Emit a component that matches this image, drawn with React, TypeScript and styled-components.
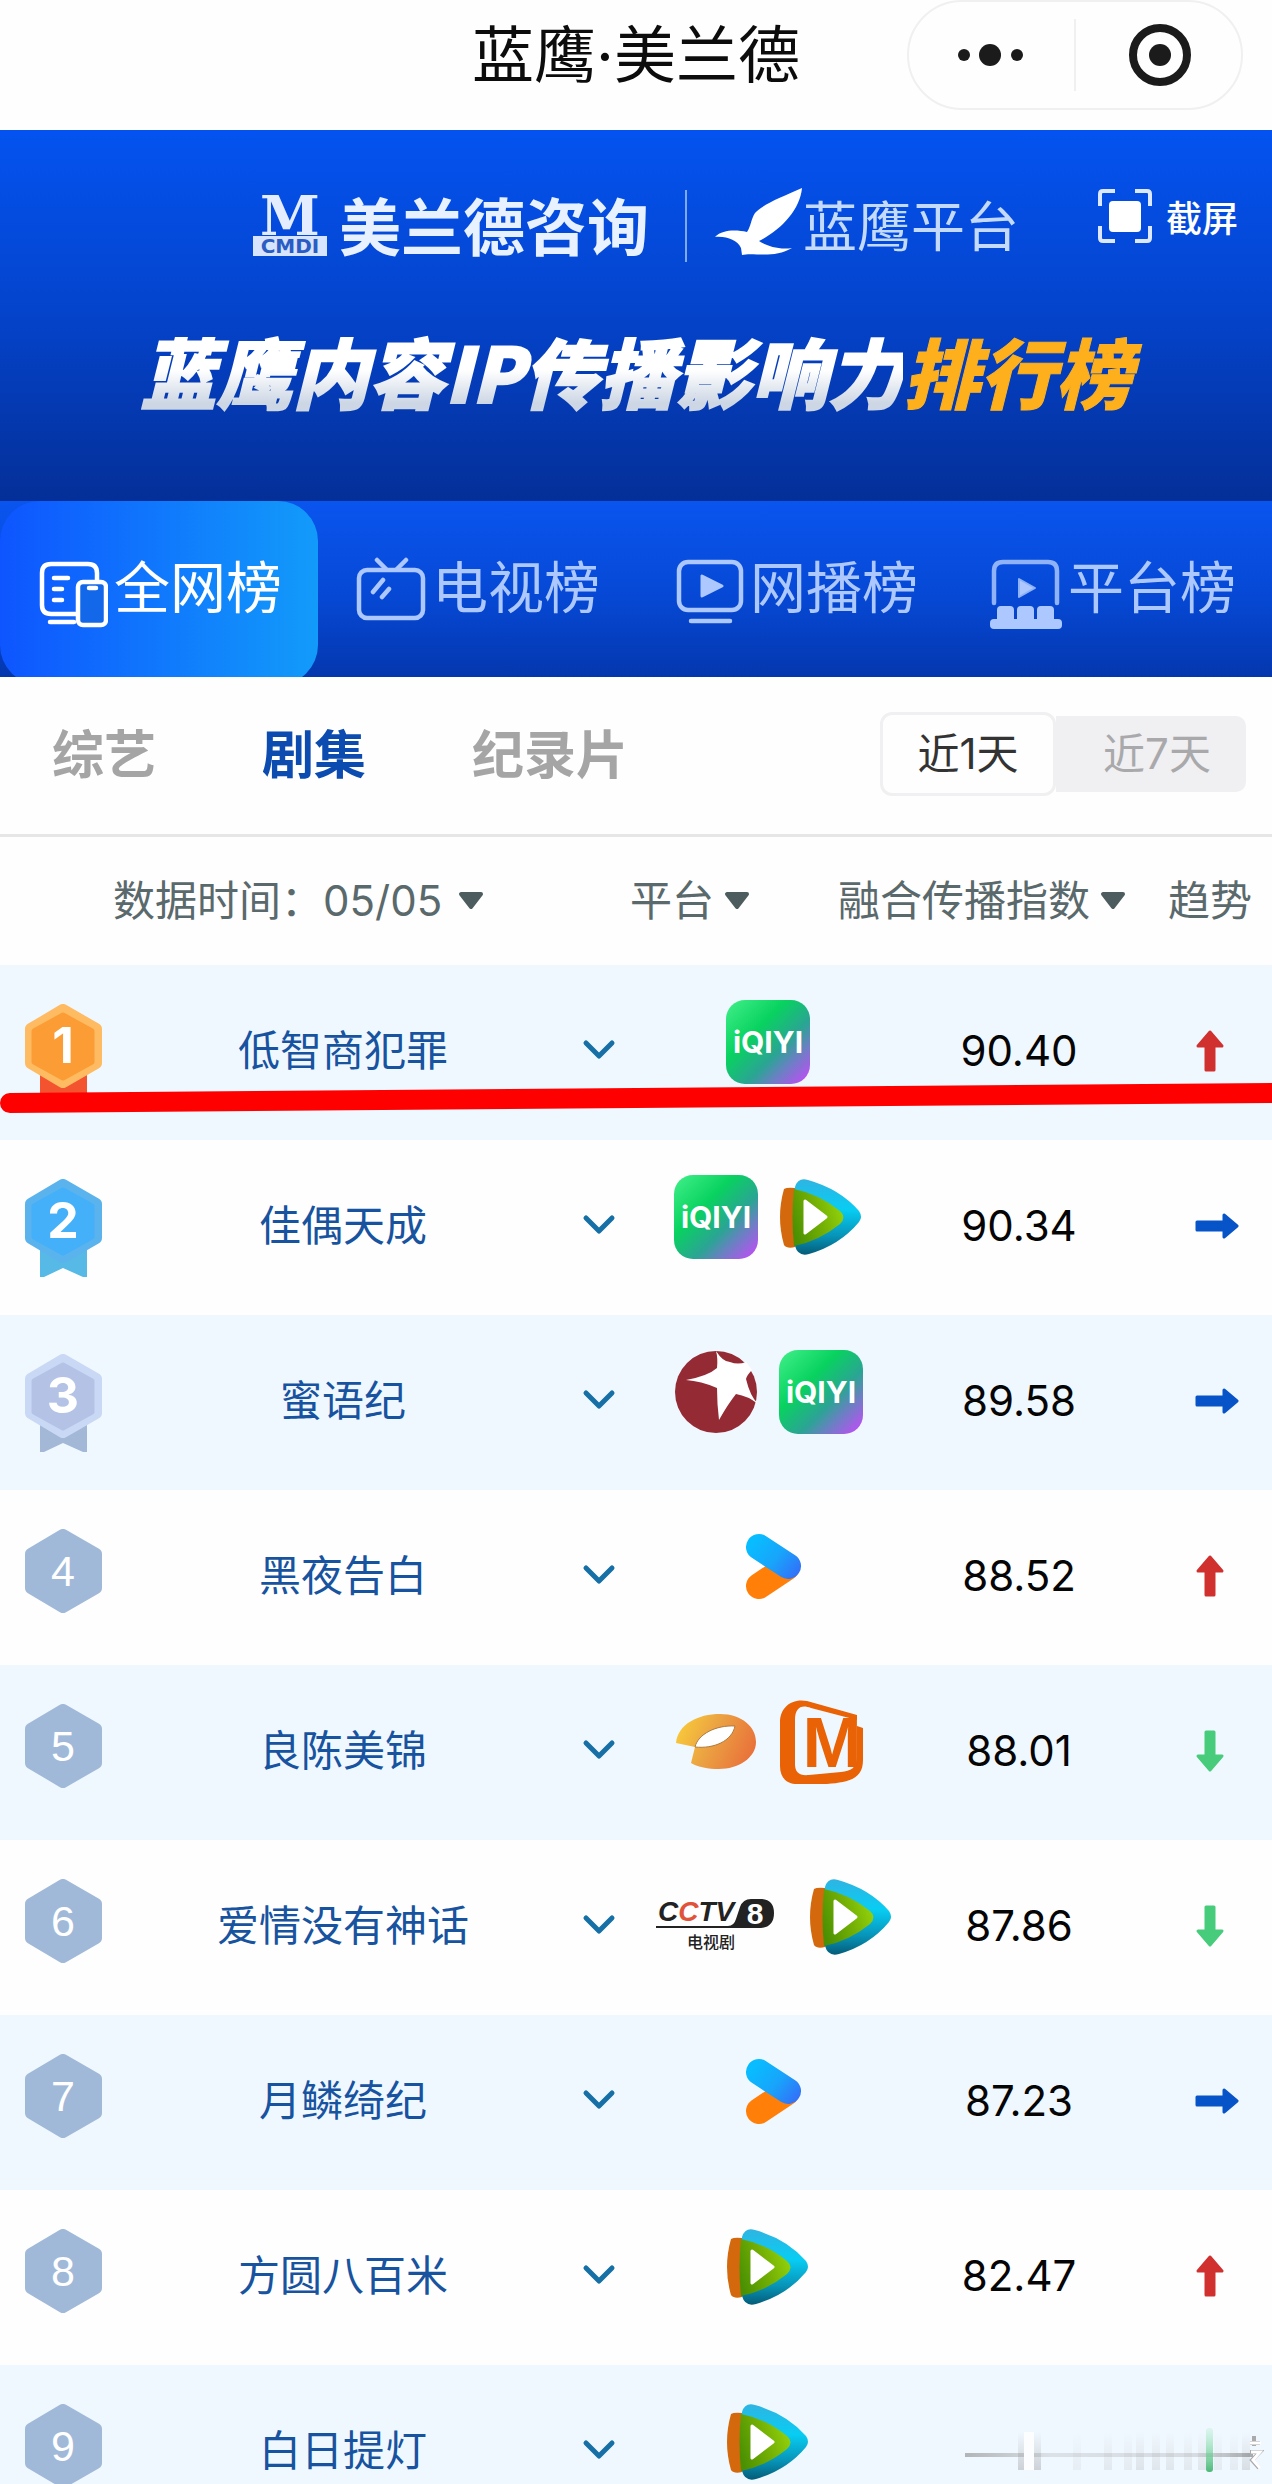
import React, { useState } from "react";
import styled, { createGlobalStyle } from "styled-components";

const GlobalStyle = createGlobalStyle`
  * { box-sizing: border-box; }
  body { margin: 0; background: #fefefe; }
  button, select { font: inherit; color: inherit; }
`;

const sans = `Inter, "Noto Sans CJK SC", "Noto Sans", sans-serif`;
const cjk = `"Noto Sans CJK SC", "Noto Sans", sans-serif`;

const Screen = styled.div`
  position: relative;
  display: flex;
  flex-direction: column;
  height: 100vh;
  overflow: hidden;
  background: #fefefe;
  font-family: ${sans};
  font-size: 42px;
  line-height: 56px;
`;

const PlainButton = styled.button`
  margin: 0;
  padding: 0;
  border: 0;
  background: none;
  cursor: pointer;
  white-space: nowrap;
`;

/* ---------- title bar ---------- */

const TitleBar = styled.header`
  flex: none;
  display: grid;
  grid-template-columns: 1fr auto 1fr;
  align-items: start;
  height: 130px;
`;

const AppTitle = styled.h1`
  grid-column: 2;
  margin: 0;
  padding-top: 16px;
  font: 400 62px/80px ${sans};
  color: #0c0c0c;
`;

const Capsule = styled.div`
  justify-self: end;
  display: flex;
  align-items: center;
  width: 336px;
  height: 110px;
  margin-right: 29px;
  border: 2px solid #f0f0f1;
  border-radius: 55px;
`;

const CapsuleButton = styled(PlainButton)`
  flex: 1;
  display: grid;
  place-items: center;
  height: 72px;
  & + & { border-left: 2px solid #f0f0f1; }
`;

/* ---------- banner ---------- */

const Banner = styled.section`
  flex: none;
  height: 371px;
  padding-top: 58px;
  background: linear-gradient(#0453f0, #0445cf 45%, #042f98);
`;

const BrandRow = styled.div`
  display: grid;
  grid-template-columns: 1fr auto 1fr;
`;

const Brands = styled.div`
  grid-column: 2;
  display: flex;
  align-items: center;
  height: 76px;
`;

const CmdiMark = styled.span`
  display: flex;
  flex-direction: column;
  align-items: center;
  width: 74px;
  margin-right: 12px;
  color: #e4edff;
`;

const CmdiLetter = styled.span`
  font: 700 54px/40px "DejaVu Serif", serif;
`;

const CmdiName = styled.span`
  width: 74px;
  background: #d6e4ff;
  color: #2a5cc4;
  font: 700 20px/20px "DejaVu Sans", sans-serif;
  text-align: center;
`;

const BrandName = styled.span`
  font: 700 62px/72px ${cjk};
  height: 76px;
  color: #e8f1ff;
`;

const PlatformName = styled.span`
  font: 400 54px/72px ${cjk};
  height: 76px;
  color: #c4dafc;
`;

const BrandRule = styled.span`
  width: 2px;
  height: 72px;
  margin: 0 26px 0 36px;
  background: #7fa8f5;
`;

const CaptureButton = styled(PlainButton)`
  justify-self: end;
  align-self: start;
  display: flex;
  align-items: center;
  gap: 14px;
  margin-right: 34px;
  font: 500 36px/52px ${cjk};
  color: #fff;
`;

const BannerTitle = styled.h2`
  display: flex;
  justify-content: center;
  margin: 50px 0 0;
  font: italic 900 76px/112px ${cjk};
`;

const TitlePart = styled.span`
  background: linear-gradient(#ffffff 50%, #ccd6e4 80%);
  background-clip: text;
  -webkit-background-clip: text;
  color: transparent;
  -webkit-text-stroke: 2px transparent;
`;

const TitleAccent = styled.span`
  color: #fdb01c;
  -webkit-text-stroke: 1px #fdb01c;
`;

/* ---------- main tabs ---------- */

const Tabs = styled.nav`
  flex: none;
  display: grid;
  grid-template-columns: repeat(4, 1fr);
  height: 176px;
  overflow: hidden;
  background: linear-gradient(#0a55ef, #0648d4 55%, #0437ae);
`;

const Tab = styled(PlainButton)<{ $active: boolean }>`
  display: flex;
  align-items: flex-end;
  justify-content: center;
  gap: 6px;
  height: 184px;
  padding-bottom: 56px;
  border-radius: 40px;
  background: ${(p) =>
    p.$active ? "linear-gradient(90deg, #0e55ff, #129bfa)" : "none"};
  color: ${(p) => (p.$active ? "#fff" : "#adc8ff")};
  font: 400 56px/90px ${cjk};
`;

/* ---------- filters ---------- */

const Filters = styled.div`
  flex: none;
  display: flex;
  align-items: center;
  justify-content: space-between;
  height: 160px;
  padding: 0 26px 4px 52px;
  border-bottom: 3px solid #e6e6e6;
`;

const Categories = styled.div`
  display: flex;
  gap: 106px;
  padding-bottom: 4px;
`;

const Category = styled(PlainButton)<{ $active: boolean }>`
  font: 700 52px/76px ${cjk};
  color: ${(p) => (p.$active ? "#0c4bb0" : "#a5a5a5")};
`;

const Segments = styled.div`
  display: flex;
  align-items: center;
`;

const Segment = styled(PlainButton)<{ $active: boolean }>`
  width: ${(p) => (p.$active ? 176 : 190)}px;
  height: ${(p) => (p.$active ? 84 : 76)}px;
  padding-left: ${(p) => (p.$active ? 0 : 12)}px;
  border: ${(p) => (p.$active ? "3px solid #f0f0f2" : "0")};
  border-radius: ${(p) => (p.$active ? "12px" : "0 10px 10px 0")};
  background: ${(p) => (p.$active ? "#fefefe" : "#f0eff2")};
  color: ${(p) => (p.$active ? "#333" : "#a9a9ab")};
`;

/* ---------- ranking table ---------- */

const List = styled.main`
  position: relative;
  flex: 1;
  min-height: 0;
  overflow: hidden;
`;

const Table = styled.table`
  width: 100%;
  table-layout: fixed;
  border-collapse: collapse;
`;

const HeadCell = styled.th<{ $indent?: number }>`
  height: 128px;
  padding: 0 0 0 ${(p) => p.$indent ?? 0}px;
  color: #5a696b;
  font-weight: 400;
  text-align: left;
  white-space: nowrap;
`;

const Picker = styled.label<{ $gap?: number }>`
  display: inline-flex;
  align-items: center;
  select { margin: 0 ${(p) => p.$gap ?? 8}px 0 0; }
`;

const Select = styled.select`
  appearance: none;
  padding: 0;
  border: 0;
  background: none;
  height: 56px;
`;

const Row = styled.tr`
  height: 175px;
  &:nth-child(odd) { background: #f0f8ff; }
`;

const Cell = styled.td<{ $lift?: number; $indent?: number }>`
  padding: 0 0 ${(p) => p.$lift ?? 0}px ${(p) => p.$indent ?? 0}px;
  vertical-align: middle;
  text-align: ${(p) => (p.$indent ? "left" : "center")};
  svg { display: block; }
`;

const ShowLink = styled.a`
  color: #17539f;
  text-decoration: none;
`;

const Score = styled.span`
  color: #050505;
`;

const ExpandButton = styled(PlainButton)`
  display: inline-grid;
  place-items: center;
  width: 60px;
  height: 60px;
  vertical-align: middle;
`;

const Logos = styled.div`
  display: flex;
  justify-content: center;
  gap: 21px;
`;

const Underline = styled.svg`
  position: absolute;
  left: 0;
  top: 244px;
  width: 100%;
  height: 36px;
  pointer-events: none;
`;

const Smear = styled.svg`
  position: absolute;
  right: 8px;
  bottom: 12px;
  pointer-events: none;
`;

/* ---------- icons ---------- */

const Caret = () => (
  <svg width="28" height="20" viewBox="0 0 28 20" aria-hidden="true">
    <path d="M4 3H24L14 16Z" fill="#4d5d5f" stroke="#4d5d5f" strokeWidth="4" strokeLinejoin="round" />
  </svg>
);

const ScreensIcon = () => (
  <svg width="72" height="72" viewBox="0 0 72 72" fill="none" stroke="#fff" strokeWidth="4.5" strokeLinecap="round">
    <path d="M40 57H15Q6 57 6 48V16Q6 7 15 7H52Q61 7 61 16V25" />
    <path d="M18 21H32M18 32H26M18 43H26M14 65H38" />
    <rect x="42" y="25" width="28" height="43" rx="5" fill="#1268e8" />
    <path d="M53 31H60" />
  </svg>
);

const TvIcon = () => (
  <svg width="72" height="72" viewBox="0 0 72 72" fill="none" stroke="#adc8ff" strokeWidth="4.5" strokeLinecap="round">
    <rect x="5" y="13" width="64" height="48" rx="8" />
    <path d="M23 3L32 12M52 3L43 12M19 35L29 23M28 40L35 32" />
  </svg>
);

const WebIcon = () => (
  <svg width="72" height="72" viewBox="0 0 72 72" fill="none" stroke="#adc8ff" strokeWidth="4.5" strokeLinecap="round">
    <rect x="7" y="5" width="62" height="48" rx="9" />
    <path d="M30 19V39L50 29Z" fill="#adc8ff" strokeWidth="3" strokeLinejoin="round" />
    <path d="M19 64H58" />
  </svg>
);

const StageIcon = () => (
  <svg width="72" height="72" viewBox="0 0 72 72" fill="none" stroke="#8fb2f8" strokeWidth="4.5" strokeLinecap="round">
    <path d="M4 46V14Q4 5 13 5H58Q67 5 67 14V46" />
    <path d="M29 22V40L45 31Z" fill="#adc8ff" strokeWidth="2" strokeLinejoin="round" />
    <g fill="#adc8ff" stroke="none">
      <path d="M7 66V53Q7 49 11 49H20Q24 49 24 53V62H27V53Q27 49 31 49H40Q44 49 44 53V62H47V53Q47 49 51 49H60Q64 49 64 53V66Z" />
      <rect x="0" y="62" width="72" height="10" rx="4" />
    </g>
  </svg>
);

const EagleIcon = () => (
  <svg width="90" height="76" viewBox="0 0 90 76" fill="#fff">
    <path d="M89 0C69 9 50 16 42 25C38 31 38 38 34 44C24 42 10 41 2 49C14 48 24 52 28 60L29 67C40 64 61 71 79 60C66 62 54 58 46 53C68 42 87 22 89 0Z" />
  </svg>
);

const CaptureIcon = () => (
  <svg width="54" height="56" viewBox="0 0 54 56">
    <path d="M2 18V6Q2 3 5 3H17M37 3H49Q52 3 52 6V18M52 38V50Q52 53 49 53H37M17 53H5Q2 53 2 50V38" fill="none" stroke="#dbe8ff" strokeWidth="4" />
    <rect x="11" y="13" width="32" height="31" rx="4" fill="#fff" />
  </svg>
);

const Chevron = () => (
  <svg width="34" height="22" viewBox="0 0 34 22" fill="none" stroke="#1670a6" strokeWidth="5" strokeLinecap="round" strokeLinejoin="round">
    <path d="M4 4L17 17L30 4" />
  </svg>
);

const medals: Record<number, [string, string, string]> = {
  1: ["#ffbb62", "#fb9c35", "#f4532f"],
  2: ["#5bb3ee", "#44b0f9", "#56b9e6"],
  3: ["#c9d8f5", "#b4c3e5", "#a2b8d6"],
};

const RankBadge = ({ rank }: { rank: number }) => {
  const medal = medals[rank];
  const [rim, face, ribbon] = medal ?? ["#a1b9d8", "#a1b9d8", ""];
  return (
    <svg width="77" height="98" viewBox="0 0 77 98" role="img" aria-label={`第${rank}名`}>
      {medal && <path d="M15 60H62V98H58L38 89L19 98H15Z" fill={ribbon} />}
      <path d="M38 6L71 25V59L38 78L6 59V25Z" fill={rim} stroke={rim} strokeWidth="12" strokeLinejoin="round" />
      {medal && <path d="M38 11L67 27V58L38 74L9 58V27Z" fill={face} stroke={face} strokeWidth="5" strokeLinejoin="round" />}
      <text
        x="38"
        y={medal ? 59 : 57}
        textAnchor="middle"
        fill="#fff"
        fontFamily={medal ? "Inter, sans-serif" : '"Liberation Sans", sans-serif'}
        fontWeight={medal ? 700 : 400}
        fontSize={medal ? 50 : 43}
      >
        {rank}
      </text>
    </svg>
  );
};

type Trend = "up" | "down" | "flat";

const TrendArrow = ({ trend }: { trend: Trend }) => (
  <svg width="44" height="44" viewBox="0 0 44 44" role="img" aria-label={{ up: "上升", down: "下降", flat: "持平" }[trend]} strokeWidth="3" strokeLinejoin="round">
    {trend === "up" && <path d="M15 3L27 17H19V41H11V17H3Z" fill="#d0312f" stroke="#d0312f" />}
    {trend === "down" && <path d="M15 41L27 27H19V3H11V27H3Z" fill="#46cc7b" stroke="#46cc7b" />}
    {trend === "flat" && <path d="M2 18H29V11L42 22L29 33V26H2Z" fill="#0753c8" stroke="#0753c8" />}
  </svg>
);

const IqiyiLogo = () => (
  <svg width="84" height="84" viewBox="0 0 84 84">
    <defs>
      <linearGradient id="iq" x1="0" y1="0" x2="1" y2="1">
        <stop offset="0" stopColor="#42f08a" />
        <stop offset="0.36" stopColor="#08d25f" />
        <stop offset="0.62" stopColor="#2ba494" />
        <stop offset="0.76" stopColor="#6b80c2" />
        <stop offset="0.95" stopColor="#b851f2" />
      </linearGradient>
    </defs>
    <rect width="84" height="84" rx="19" fill="url(#iq)" />
    <text x="42" y="53" textAnchor="middle" fill="#fff" fontFamily="Inter, sans-serif" fontWeight="700" fontSize="30">iQIYI</text>
  </svg>
);

const TencentLogo = () => (
  <svg width="84" height="84" viewBox="0 0 84 84">
    <defs>
      <linearGradient id="tb" x1="0" y1="0" x2="0" y2="1">
        <stop offset="0" stopColor="#2fb4e2" />
        <stop offset="0.4" stopColor="#08cdf3" />
        <stop offset="0.75" stopColor="#0794b8" />
        <stop offset="1" stopColor="#045c78" />
      </linearGradient>
      <linearGradient id="tg" x1="0" y1="0.7" x2="1" y2="0.3">
        <stop offset="0" stopColor="#4b9003" />
        <stop offset="0.5" stopColor="#72ae04" />
        <stop offset="1" stopColor="#95d40c" />
      </linearGradient>
    </defs>
    <path d="M5 14Q8 12 16 13V72Q8 74 5 70Q-3 42 5 14Z" fill="#d4680c" />
    <path d="M16 12Q19 2 29 5Q61 14 80 36Q84 42 80 47Q61 70 30 79Q19 82 16 71Q12 42 16 12Z" fill="url(#tb)" />
    <path d="M15 14Q40 19 61 36Q68 42 61 49Q40 66 15 71Q12 42 15 14Z" fill="url(#tg)" />
    <path d="M26 26L47 42L26 58Z" fill="#fff" stroke="#fff" strokeWidth="3" strokeLinejoin="round" />
  </svg>
);

const DragonLogo = () => (
  <svg width="84" height="84" viewBox="0 0 84 84">
    <circle cx="42" cy="42" r="41" fill="#942b34" />
    <path d="M42 1Q49 12 56 12Q64 15 72 12L78 20Q73 25 72 29Q76 46 84 54Q74 46 62 44Q54 54 45 70Q43 54 43 38Q27 31 12 30Q34 26 43 18Q44 8 42 1Z" fill="#fff" />
  </svg>
);

const YoukuLogo = () => (
  <svg width="84" height="84" viewBox="0 0 84 84" fill="none" strokeWidth="26" strokeLinecap="round">
    <defs>
      <linearGradient id="yk" gradientUnits="userSpaceOnUse" x1="28" y1="14" x2="74" y2="52">
        <stop offset="0" stopColor="#08bdff" />
        <stop offset="0.5" stopColor="#18a4fb" />
        <stop offset="1" stopColor="#366af8" />
      </linearGradient>
    </defs>
    <path d="M33 61L60 43" stroke="#ff7f08" />
    <path d="M33 22L62 41" stroke="url(#yk)" />
  </svg>
);

const ZhejiangLogo = () => (
  <svg width="84" height="84" viewBox="0 0 84 84">
    <defs>
      <linearGradient id="zj" x1="0" y1="0.3" x2="1" y2="0.6">
        <stop offset="0" stopColor="#f8ca3a" />
        <stop offset="0.45" stopColor="#eba242" />
        <stop offset="1" stopColor="#e9713a" />
      </linearGradient>
    </defs>
    <path d="M2 43C4 24 24 14 46 14C68 14 82 27 82 42C82 58 64 69 45 69C34 69 24 67 17 63L21 47Z" fill="url(#zj)" />
    <path d="M21 47C24 34 42 25 61 26C58 41 40 49 21 47Z" fill="#fff" stroke="#b07a40" strokeWidth="1" />
  </svg>
);

const MangoLogo = () => (
  <svg width="84" height="84" viewBox="0 0 84 84">
    <path d="M78 15L28 1C12 -2 1 8 1 22V66C1 78 8 84 18 84H48C72 82 84 78 84 60V28L78 26V58C77 68 72 71 62 72L30 75C20 76 16 72 16 64V20C16 8 22 4 32 8L78 20Z" fill="#e96205" />
    <text x="53" y="67" textAnchor="middle" fill="#e96205" fontFamily='"Liberation Sans", sans-serif' fontWeight="700" fontSize="71">M</text>
  </svg>
);

const CctvLogo = () => (
  <svg width="144" height="84" viewBox="0 0 144 84">
    <path d="M12 51H84Q90 51 92 44L96 32Q99 24 107 24H118Q130 25 130 38Q130 52 117 53H12Z" fill="#222" />
    <text x="14" y="46" fill="#222" fontFamily='"Liberation Sans", sans-serif' fontWeight="700" fontStyle="italic" fontSize="28">
      C<tspan fill="#e0533a">C</tspan>TV
    </text>
    <text x="111" y="49" textAnchor="middle" fill="#fff" fontFamily='"Liberation Sans", sans-serif' fontWeight="700" fontSize="30">8</text>
    <text x="67" y="73" textAnchor="middle" fill="#222" fontFamily='"Noto Sans CJK SC", sans-serif' fontWeight="500" fontSize="16">电视剧</text>
  </svg>
);

/* ---------- data ---------- */

const logos = {
  iqiyi: IqiyiLogo,
  tencent: TencentLogo,
  dragon: DragonLogo,
  youku: YoukuLogo,
  zhejiang: ZhejiangLogo,
  mango: MangoLogo,
  cctv8: CctvLogo,
};

interface Show {
  name: string;
  platforms: (keyof typeof logos)[];
  score?: string;
  trend?: Trend;
}

const shows: Show[] = [
  { name: "低智商犯罪", platforms: ["iqiyi"], score: "90.40", trend: "up" },
  { name: "佳偶天成", platforms: ["iqiyi", "tencent"], score: "90.34", trend: "flat" },
  { name: "蜜语纪", platforms: ["dragon", "iqiyi"], score: "89.58", trend: "flat" },
  { name: "黑夜告白", platforms: ["youku"], score: "88.52", trend: "up" },
  { name: "良陈美锦", platforms: ["zhejiang", "mango"], score: "88.01", trend: "down" },
  { name: "爱情没有神话", platforms: ["cctv8", "tencent"], score: "87.86", trend: "down" },
  { name: "月鳞绮纪", platforms: ["youku"], score: "87.23", trend: "flat" },
  { name: "方圆八百米", platforms: ["tencent"], score: "82.47", trend: "up" },
  { name: "白日提灯", platforms: ["tencent"] },
];

const tabs = [
  { label: "全网榜", Icon: ScreensIcon },
  { label: "电视榜", Icon: TvIcon },
  { label: "网播榜", Icon: WebIcon },
  { label: "平台榜", Icon: StageIcon },
];

const stripes = [
  [58, 0.3], [73, 0.3], [113, 0.08], [144, 0.12], [164, 0.1], [176, 0.16],
  [192, 0.14], [206, 0.14], [224, 0.12], [238, 0.14], [254, 0.1], [270, 0.1], [282, 0.2],
];

export default function App() {
  const [tab, setTab] = useState("全网榜");
  const [category, setCategory] = useState("剧集");
  const [range, setRange] = useState("近1天");

  return (
    <Screen>
      <GlobalStyle />
      <TitleBar>
        <AppTitle>蓝鹰·美兰德</AppTitle>
        <Capsule>
          <CapsuleButton aria-label="更多">
            <svg width="68" height="24" viewBox="0 0 68 24" fill="#1b1b1b">
              <circle cx="6" cy="12" r="6" />
              <circle cx="32" cy="12" r="11" />
              <circle cx="59" cy="12" r="6" />
            </svg>
          </CapsuleButton>
          <CapsuleButton aria-label="关闭">
            <svg width="64" height="64" viewBox="0 0 64 64">
              <circle cx="33" cy="32" r="27" fill="none" stroke="#1b1b1b" strokeWidth="8" />
              <circle cx="33" cy="32" r="11" fill="#1b1b1b" />
            </svg>
          </CapsuleButton>
        </Capsule>
      </TitleBar>

      <Banner>
        <BrandRow>
          <Brands>
            <CmdiMark>
              <CmdiLetter>M</CmdiLetter>
              <CmdiName>CMDI</CmdiName>
            </CmdiMark>
            <BrandName>美兰德咨询</BrandName>
            <BrandRule />
            <EagleIcon />
            <PlatformName>蓝鹰平台</PlatformName>
          </Brands>
          <CaptureButton>
            <CaptureIcon />
            截屏
          </CaptureButton>
        </BrandRow>
        <BannerTitle>
          <TitlePart>蓝鹰内容IP传播影响力</TitlePart>
          <TitleAccent>排行榜</TitleAccent>
        </BannerTitle>
      </Banner>

      <Tabs>
        {tabs.map(({ label, Icon }) => (
          <Tab key={label} $active={tab === label} onClick={() => setTab(label)}>
            <Icon />
            {label}
          </Tab>
        ))}
      </Tabs>

      <Filters>
        <Categories>
          {["综艺", "剧集", "纪录片"].map((c) => (
            <Category key={c} $active={category === c} onClick={() => setCategory(c)}>
              {c}
            </Category>
          ))}
        </Categories>
        <Segments>
          {["近1天", "近7天"].map((r) => (
            <Segment key={r} $active={range === r} onClick={() => setRange(r)}>
              {r}
            </Segment>
          ))}
        </Segments>
      </Filters>

      <List>
        <Table>
          <colgroup>
            <col width="118" />
            <col />
            <col width="62" />
            <col width="208" />
            <col width="68" />
            <col width="226" />
            <col width="140" />
          </colgroup>
          <thead>
            <tr>
              <HeadCell colSpan={3} $indent={113}>
                <Picker $gap={14}>
                  数据时间：
                  <Select defaultValue="05/05">
                    <option>05/05</option>
                  </Select>
                  <Caret />
                </Picker>
              </HeadCell>
              <HeadCell>
                <Picker>
                  <Select aria-label="平台" defaultValue="平台">
                    <option>平台</option>
                  </Select>
                  <Caret />
                </Picker>
              </HeadCell>
              <HeadCell colSpan={2}>
                <Picker>
                  <Select aria-label="指数" defaultValue="融合传播指数">
                    <option>融合传播指数</option>
                  </Select>
                  <Caret />
                </Picker>
              </HeadCell>
              <HeadCell $indent={36}>趋势</HeadCell>
            </tr>
          </thead>
          <tbody>
            {shows.map((show, i) => (
              <Row key={show.name}>
                <Cell $indent={25}>
                  <RankBadge rank={i + 1} />
                </Cell>
                <Cell $lift={4}>
                  <ShowLink href="#">{show.name}</ShowLink>
                </Cell>
                <Cell $lift={6}>
                  <ExpandButton aria-label="展开">
                    <Chevron />
                  </ExpandButton>
                </Cell>
                <Cell colSpan={2} $lift={22}>
                  <Logos>
                    {show.platforms.map((p) => {
                      const Logo = logos[p];
                      return <Logo key={p} />;
                    })}
                  </Logos>
                </Cell>
                <Cell $lift={4}>
                  <Score>{show.score}</Score>
                </Cell>
                <Cell $lift={4} $indent={63}>
                  {show.trend && <TrendArrow trend={show.trend} />}
                </Cell>
              </Row>
            ))}
          </tbody>
        </Table>
        <Underline>
          <line x1="10" y1="22" x2="101%" y2="12" stroke="#fe0000" strokeWidth="20" strokeLinecap="round" />
        </Underline>
      </List>

      <Smear width="300" height="44" viewBox="0 0 300 44">
        <defs>
          <linearGradient id="fade" x1="0" y1="0" x2="0" y2="1">
            <stop offset="0" stopColor="#777" stopOpacity="0" />
            <stop offset="1" stopColor="#777" />
          </linearGradient>
          <linearGradient id="green" x1="0" y1="0" x2="0" y2="1">
            <stop offset="0" stopColor="#8fe8b4" stopOpacity="0.2" />
            <stop offset="1" stopColor="#4cb877" />
          </linearGradient>
          <linearGradient id="streak">
            <stop offset="0" stopColor="#888" stopOpacity="0.6" />
            <stop offset="0.3" stopColor="#888" stopOpacity="0.2" />
            <stop offset="0.8" stopColor="#888" stopOpacity="0.25" />
            <stop offset="1" stopColor="#777" stopOpacity="0.6" />
          </linearGradient>
        </defs>
        <rect x="1" y="25" width="288" height="4" fill="url(#streak)" />
        {stripes.map(([x, opacity]) => (
          <rect key={x} x={x - 4} y="4" width="8" height="38" fill="url(#fade)" opacity={opacity} />
        ))}
        <rect x="60" y="4" width="10" height="38" fill="#fbfdff" />
        <rect x="242" y="0" width="7" height="44" rx="3" fill="url(#green)" />
        <path d="M290 8V18M286 15H296M286 24H296L288 32L295 40" fill="none" stroke="#aaa" strokeWidth="4" />
        <path d="M286 15H297M287 24H296L289 32L296 40" fill="none" stroke="#fff" strokeWidth="3" />
      </Smear>
    </Screen>
  );
}
